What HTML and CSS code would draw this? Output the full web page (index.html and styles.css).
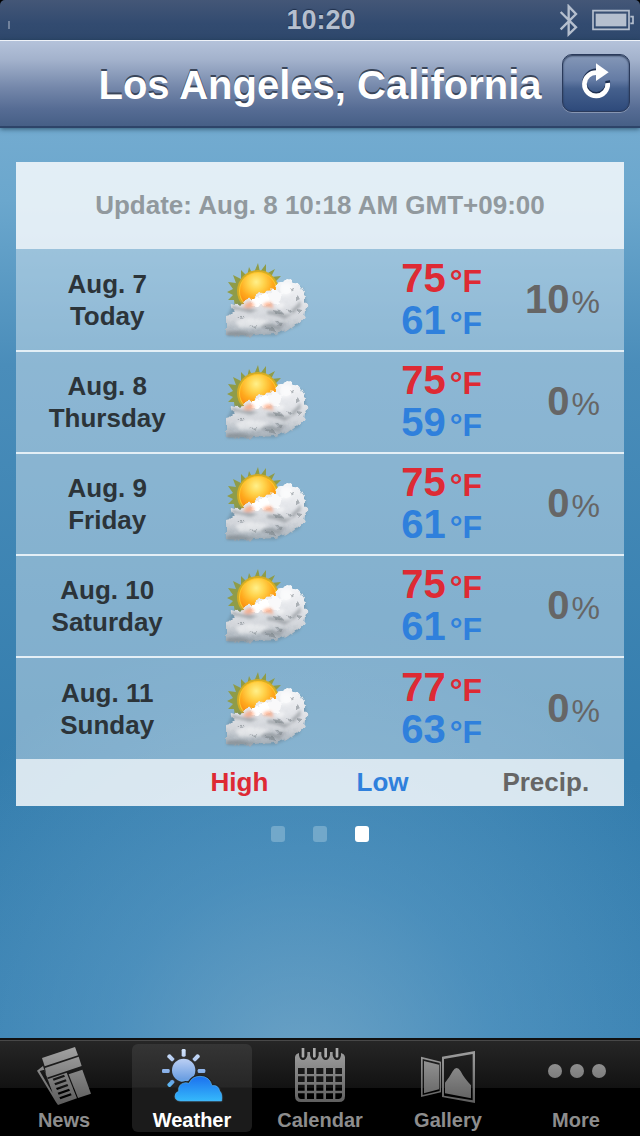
FILE: index.html
```html
<!DOCTYPE html>
<html lang="en">
<head>
<meta charset="utf-8">
<meta name="viewport" content="width=device-width, initial-scale=1">
<title>Weather</title>
<link rel="stylesheet" href="styles.css">
</head>
<body>
<svg class="defs" aria-hidden="true">
  <defs>
    <radialGradient id="sunFill" cx="45%" cy="25%" r="75%">
      <stop offset="0" stop-color="#fff08a"/><stop offset=".3" stop-color="#ffd34c"/><stop offset=".6" stop-color="#ffab1e"/><stop offset="1" stop-color="#f77d10"/>
    </radialGradient>
    <linearGradient id="cloudFill" x1="0" y1="0" x2="0" y2="1">
      <stop offset="0" stop-color="#f6f7f9"/><stop offset=".4" stop-color="#e4e6ea"/><stop offset=".7" stop-color="#d2d5da"/><stop offset="1" stop-color="#9faab3"/>
    </linearGradient>
    <linearGradient id="tabFill" x1="0" y1="50" x2="0" y2="225" gradientUnits="userSpaceOnUse">
      <stop offset="0" stop-color="#a3a3a3"/><stop offset="1" stop-color="#5c5c5c"/>
    </linearGradient>
    <linearGradient id="tabSun" x1="0" y1="55" x2="0" y2="170" gradientUnits="userSpaceOnUse">
      <stop offset="0" stop-color="#d6e6fb"/><stop offset=".35" stop-color="#b0c8f1"/><stop offset=".8" stop-color="#6c9fe2"/><stop offset="1" stop-color="#5cb8f4"/>
    </linearGradient>
    <linearGradient id="tabCloud" x1="0" y1="0" x2="0" y2="1">
      <stop offset="0" stop-color="#1c70ee"/><stop offset="1" stop-color="#35b9fb"/>
    </linearGradient>
    <filter id="rough" x="-10%" y="-10%" width="120%" height="120%">
      <feTurbulence type="fractalNoise" baseFrequency=".22" numOctaves="2" seed="8" result="n"/>
      <feDisplacementMap in="SourceGraphic" in2="n" scale="5" xChannelSelector="R" yChannelSelector="G"/>
      <feGaussianBlur stdDeviation=".6"/>
    </filter>
    <filter id="soft" x="-10%" y="-10%" width="120%" height="120%"><feGaussianBlur stdDeviation=".6"/></filter>
    <filter id="haze" x="-20%" y="-20%" width="140%" height="140%"><feGaussianBlur stdDeviation="1.5"/></filter>
    <symbol id="partly" viewBox="0 0 84 76" overflow="visible">
      <g filter="url(#soft)">
        <path fill="#8f9c48" d="M33 1l2 9 6-8 0 10 9-5-4 8 10-1-6 6 9 3-9 3 6 7-9-1 3 9-40 4-1-7-6 0 5-5-6-3 6-3-5-7 8 1-3-8 8 4 0-9 6 6 2-9 4 8z"/>
        <circle cx="33" cy="29" r="21" fill="#d3ac25"/>
        <circle cx="33" cy="29" r="19" fill="#ffc62b"/>
        <circle cx="33" cy="29" r="18" fill="url(#sunFill)"/>
      </g>
      <path fill="#5d7482" opacity=".4" filter="url(#haze)" d="M2 54L8 43 30 38 52 34 62 20 78 27 82 45 74 63 50 74 2 73z"/>
      <g filter="url(#rough)">
        <path fill="url(#cloudFill)" d="M1 54Q7 53 10 49Q5 47 6 42Q12 44 18 42Q21 36 28 37Q32 28 39 32Q43 25 51 29Q50 19 58 20Q62 14 68 20Q75 20 77 28Q82 33 79 39Q85 44 80 50Q80 58 72 61Q67 68 58 69Q48 74 37 72Q20 75 1 73Z"/>
        <circle cx="31" cy="40" r="5" fill="#fff"/><circle cx="40" cy="37" r="6" fill="#fff"/><circle cx="50" cy="35" r="7" fill="#f9f9fa"/><circle cx="61" cy="26" r="6" fill="#f5f6f8"/>
      </g>
      <g filter="url(#haze)">
        <path fill="#737a80" opacity=".5" d="M7 43q10 4 16 3l10 2-8 3q-10-3-18-4zM42 49q10-1 18 4l8-2-8 6q-8-4-18-5zM36 64q9-4 16 0l10-4-8 8q-8-3-18-2zM2 70q14-2 20 1l10 1-10 2H2zM66 48q7-5 9-10l1 6-8 8z"/>
        <path fill="#ff8f5c" opacity=".6" d="M18 45q4-6 9-5l3 4-6 2zM37 44q5-6 10-3l2 5z"/>
        <path fill="#fff" opacity=".5" d="M10 60q10-6 19-4l15 2-9 7-20 1zM48 44q6-5 12-2l-3 5zM56 22q9-3 13 5l-4 6-9 1z"/>
      </g>
      <g filter="url(#rough)">
        <path fill="#71797f" opacity=".5" d="M47 48l8 1 4 4-8-2zM39 65l9 1 4 4-7-1zM50 60l7 1-3 3zM62 47l6 3-3 2zM65 25l5 3-3 2zM71 33l4 4-4 2zM73 47l4 1-4 4zM12 55l9 0-4 2zM24 64l9-1-4 3z"/>
      </g>
    </symbol>
  </defs>
</svg>
<div class="app">
  <header class="status">
    <span class="signal"></span>
    <time class="clock">10:20</time>
    <div class="indicators">
      <svg class="bluetooth" viewBox="716 8 66 99" role="img" aria-label="Bluetooth"><path d="M724 32L770 78 748 99V15L770 38 724 84" fill="none" stroke="#b5bfce" stroke-width="7"/></svg>
      <svg class="battery" viewBox="816 24 126 66" role="img" aria-label="Battery full"><path d="M819 29h108v56H819zM931 47h8v20h-8" fill="none" stroke="#b5bfce" stroke-width="5"/><path d="M827 38h92v38h-92z" fill="#b5bfce"/></svg>
    </div>
  </header>
  <nav class="navbar">
    <h1 class="title">Los Angeles, California</h1>
    <button class="refresh" type="button" aria-label="Refresh"><svg viewBox="780 186 96 114"><path d="M863 242A35 35 0 1 1 832 213" fill="none" stroke="#1d2f50" stroke-width="14"/><path d="M863 249A35 35 0 1 1 832 218" fill="none" stroke="#fff" stroke-width="14"/><path d="M828 190L866 217 828 243z" fill="#fff"/></svg></button>
  </nav>
  <main class="content">
    <section class="panel">
      <p class="update">Update: Aug. 8 10:18 AM GMT+09:00</p>
      <table class="forecast">
        <colgroup><col class="c-day"><col class="c-icon"><col class="c-temp"><col class="c-rain"></colgroup>
        <tbody>
          <tr><th scope="row">Aug. 7<br>Today</th><td><svg class="sky" role="img" aria-label="Partly cloudy"><use href="#partly"/></svg></td><td class="temp"><div class="high">75<small>°F</small></div><div class="low">61<small>°F</small></div></td><td class="rain">10<small>%</small></td></tr>
          <tr><th scope="row">Aug. 8<br>Thursday</th><td><svg class="sky" role="img" aria-label="Partly cloudy"><use href="#partly"/></svg></td><td class="temp"><div class="high">75<small>°F</small></div><div class="low">59<small>°F</small></div></td><td class="rain">0<small>%</small></td></tr>
          <tr><th scope="row">Aug. 9<br>Friday</th><td><svg class="sky" role="img" aria-label="Partly cloudy"><use href="#partly"/></svg></td><td class="temp"><div class="high">75<small>°F</small></div><div class="low">61<small>°F</small></div></td><td class="rain">0<small>%</small></td></tr>
          <tr><th scope="row">Aug. 10<br>Saturday</th><td><svg class="sky" role="img" aria-label="Partly cloudy"><use href="#partly"/></svg></td><td class="temp"><div class="high">75<small>°F</small></div><div class="low">61<small>°F</small></div></td><td class="rain">0<small>%</small></td></tr>
          <tr><th scope="row">Aug. 11<br>Sunday</th><td><svg class="sky" role="img" aria-label="Partly cloudy"><use href="#partly"/></svg></td><td class="temp"><div class="high">77<small>°F</small></div><div class="low">63<small>°F</small></div></td><td class="rain">0<small>%</small></td></tr>
        </tbody>
      </table>
      <div class="legend"><span class="high">High</span><span class="low">Low</span><span class="precip">Precip.</span></div>
    </section>
    <div class="pages">
      <button class="page" type="button" aria-label="Page 1"></button>
      <button class="page" type="button" aria-label="Page 2"></button>
      <button class="page current" type="button" aria-label="Page 3"></button>
    </div>
  </main>
  <footer class="tabbar">
    <a class="tab" href="#news">
      <svg viewBox="96 42 192 192" aria-hidden="true"><g fill="url(#tabFill)">
        <path d="M126 84L225 51 234 76 134 109z"/>
        <path fill-rule="evenodd" d="M135 114L236 80 245 108 140 143zM142 148L200 128 231 205 174 225 168 217 111 122 129 108zM119 123L158 189 133 119zM158 146L192 134 195 140 161 152zM163 160L197 148 200 154 166 166zM168 174L202 162 205 168 171 180zM173 188L207 176 210 182 176 194zM178 202L212 190 215 196 181 208z"/>
        <path d="M206 133L247 119 273 191 234 204z"/>
      </g></svg><span>News</span></a>
    <a class="tab selected" href="#weather" aria-current="page">
      <svg viewBox="480 42 192 192" aria-hidden="true">
        <g fill="url(#tabSun)"><circle cx="551" cy="121" r="35"/><rect x="545" y="57" width="12" height="23" rx="4"/><rect x="486" y="117" width="23" height="12" rx="4"/><rect x="593" y="117" width="23" height="12" rx="4"/>
        <rect x="506" y="72" width="12" height="23" rx="4" transform="rotate(-45 512 83)"/><rect x="583" y="72" width="12" height="23" rx="4" transform="rotate(45 589 83)"/><rect x="507" y="149" width="12" height="23" rx="4" transform="rotate(45 513 160)"/></g>
        <path d="M541 213Q525 212 525 199Q525 188 536 184Q533 161 557 158Q567 160 567 160Q576 139 600 139Q629 139 636 167Q655 164 659 183Q668 191 665 213Z" fill="none" stroke="#222" stroke-width="10"/>
        <path d="M541 213Q525 212 525 199Q525 188 536 184Q533 161 557 158Q567 160 567 160Q576 139 600 139Q629 139 636 167Q655 164 659 183Q668 191 665 213Z" fill="url(#tabCloud)" stroke="#55b5f5" stroke-width="2"/>
      </svg><span>Weather</span></a>
    <a class="tab" href="#calendar">
      <svg viewBox="114 42 192 192" aria-hidden="true">
        <path fill="url(#tabFill)" fill-rule="evenodd" d="M135 82Q136 72 147 69V76Q149 90 159 90Q169 90 172 76V66H180V76Q183 90 193 90Q203 90 206 76V66H214V76Q217 90 227 90Q237 90 240 76V66H248V76Q251 90 261 90Q271 90 273 76V69Q284 72 285 82V198Q285 216 267 216H153Q135 216 135 198zM144 114v18h20v-18zM171 114v18h21v-18zM199 114v18h21v-18zM228 114v18h21v-18zM256 114v18h20v-18zM144 139v17h20v-17zM171 139v17h21v-17zM199 139v17h21v-17zM228 139v17h21v-17zM256 139v17h20v-17zM144 164v18h20v-18zM171 164v18h21v-18zM199 164v18h21v-18zM228 164v18h21v-18zM256 164v18h20v-18zM144 190v8q2 9 9 9h11v-17zM171 190v17h21v-17zM199 190v17h21v-17zM228 190v17h21v-17zM256 190v17h11q8-1 9-9v-8z"/>
        <path fill="#aaa" d="M155 54h8v27q-4 5-8 0zM189 54h8v27q-4 5-8 0zM223 54h8v27q-4 5-8 0zM257 54h8v27q-4 5-8 0z"/>
      </svg><span>Calendar</span></a>
    <a class="tab" href="#gallery">
      <svg viewBox="498 42 192 192" aria-hidden="true"><g fill="url(#tabFill)" fill-rule="evenodd">
        <path d="M513 80L573 95V187L513 201zM518 87V195L569 183V99zM522 93L567 104V178L522 190z"/>
        <path d="M576 80L675 63V219L576 201zM582 87V197L668 211V72zM585 158Q600 140 608 124Q620 104 632 124Q642 144 663 166V205L585 190z"/>
      </g></svg><span>Gallery</span></a>
    <a class="tab" href="#more">
      <svg viewBox="882 42 192 192" aria-hidden="true"><g fill="url(#tabFill)"><circle cx="915" cy="123" r="21"/><circle cx="981" cy="123" r="21"/><circle cx="1047" cy="123" r="21"/></g></svg><span>More</span></a>
  </footer>
</div>
</body>
</html>
```
FILE: styles.css
```css
* { box-sizing: border-box; }
body {
  margin: 0;
  background: #000;
  font-family: "Liberation Sans", Arial, sans-serif;
  font-weight: bold;
}
.defs { position: absolute; width: 0; height: 0; }
.app { display: flex; flex-direction: column; min-height: 100vh; }

.status {
  display: grid;
  grid-template-columns: 1fr auto 1fr;
  align-items: center;
  height: 40px;
  padding: 0 6px 0 8px;
  border-radius: 5px 5px 0 0;
  background: linear-gradient(#445777, #324b70 60%, #2f486c);
}
.signal { width: 2px; height: 8px; margin-top: 10px; background: #71829c; }
.clock { color: #b5bfce; font-size: 27px; line-height: 40px; text-shadow: 0 -1px 1px #1f304c; }
.indicators { display: flex; justify-content: flex-end; align-items: center; gap: 12px; }
.bluetooth { width: 22px; height: 33px; }
.battery { width: 42px; height: 22px; }

.navbar {
  display: grid;
  grid-template-columns: 1fr auto 1fr;
  align-items: center;
  height: 88px;
  padding: 0 10px;
  border-top: 1px solid #eef2f8;
  border-bottom: 2px solid #2d4469;
  background: linear-gradient(#b4c2da, #a3b2cc 22%, #7487aa 55%, #566c94 80%, #465f86);
  box-shadow: 0 1px 5px rgba(20, 50, 70, .7);
  z-index: 1;
}
.title {
  grid-column: 2;
  margin: 0;
  padding-top: 2px;
  color: #fff;
  font-size: 40px;
  line-height: 48px;
  white-space: nowrap;
  text-shadow: 0 -2px 0 #3a465a;
}
.refresh {
  display: grid;
  place-items: center;
  justify-self: end;
  width: 68px;
  height: 58px;
  margin-bottom: 2px;
  padding: 0 0 4px;
  border: 1px solid #2a3a5b;
  border-radius: 10px;
  background: linear-gradient(#8598b8, #647ba4 45%, #45608d 60%, #2e4a7b);
  box-shadow: 0 1px 0 #8796b2, inset 0 1px 2px #22324f;
}
.refresh svg { width: 32px; height: 38px; }

.content {
  flex: 1;
  padding: 34px 16px 0;
  background:
    radial-gradient(ellipse 68% 50% at 47% 104%, rgba(135, 180, 208, .65), rgba(105, 165, 205, .42) 45%, rgba(60, 130, 175, 0)),
    linear-gradient(#73abd0, #6ba7cd 8%, #4a8dba 26%, #3d84b3 50%, #347dad 70%, #3780b1);
}
.panel { background: rgba(255, 255, 255, .37); }
.update {
  margin: 0;
  color: #91999e;
  background: rgba(255, 255, 255, .69);
  font-size: 26px;
  line-height: 87px;
  text-align: center;
}
.forecast { width: 100%; border-collapse: collapse; table-layout: fixed; }
.c-day { width: 30%; }
.c-icon { width: 23%; }
.c-temp { width: 24%; }
.c-rain { width: 23%; }
.forecast tr { height: 102px; border-bottom: 2px solid #e4eff6; }
.forecast tr:last-child { border-bottom: 0; }
.forecast th, .forecast td { padding: 0; vertical-align: middle; }
.forecast th { color: #2c3439; font-size: 26px; line-height: 32px; text-align: center; }
.sky { display: block; width: 84px; height: 76px; margin-left: 27px; overflow: visible; }
.forecast .temp { padding: 0 2px 2px 0; font-size: 40px; line-height: 42px; text-align: right; }
.temp small, .rain small { margin-left: 4px; font-size: 32px; line-height: 1; }
.high { color: #de2a34; }
.low { color: #2f80dc; }
.forecast .rain { padding: 0 24px 2px 0; color: #666; font-size: 40px; line-height: 42px; text-align: right; }
.rain small { margin-left: 2px; font-weight: normal; }
.legend {
  display: grid;
  grid-template-columns: 24% 24% 20%;
  justify-content: end;
  background: rgba(255, 255, 255, .69);
  font-size: 26px;
  line-height: 47px;
}
.precip { color: #666; }

.pages { display: flex; justify-content: center; gap: 28px; padding-top: 20px; }
.page { width: 14px; height: 16px; padding: 0; border: 0; border-radius: 3px; background: #72a8ca; }
.page.current { background: #fff; }

.tabbar {
  display: grid;
  grid-template-columns: repeat(5, 1fr);
  gap: 8px;
  padding: 4px;
  border-top: 2px solid #111;
  background: linear-gradient(#262626, #121212) 0 1px / 100% 47px no-repeat #000;
  box-shadow: inset 0 1px 0 #484848;
}
.tab {
  display: flex;
  flex-direction: column;
  align-items: center;
  border-radius: 6px;
  color: #8d8d8d;
  font-size: 20px;
  line-height: 24px;
  text-decoration: none;
}
.tab svg { width: 64px; height: 64px; }
.tab.selected { color: #fff; background: linear-gradient(#353535, #262626 49%, #1b1b1b 50%); }
```
